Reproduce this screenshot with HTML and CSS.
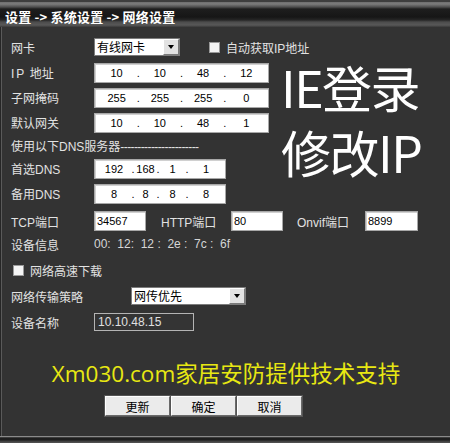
FILE: index.html
```html
<!DOCTYPE html>
<html lang="zh-CN">
<head>
<meta charset="utf-8">
<title>网络设置</title>
<link rel="stylesheet" href="styles.css">
</head>
<body>
<div class="window">
  <div class="titlebar"><span class="title">设置 -&gt; 系统设置 -&gt; 网络设置</span></div>
  <div class="form">
    <div class="row r-nic">
      <span class="label">网卡</span>
      <div class="select sel-nic"><span class="sel-text">有线网卡</span><span class="sel-btn"><i class="arrow"></i></span></div>
      <span class="check check-dhcp"></span><span class="check-label">自动获取IP地址</span>
    </div>
    <div class="row r-field">
      <span class="label"><span class="ip-sp">IP</span> 地址</span>
      <div class="field ipbox"><span class="seg">10</span><span class="dot">.</span><span class="seg">10</span><span class="dot">.</span><span class="seg">48</span><span class="dot">.</span><span class="seg">12</span></div>
    </div>
    <div class="row r-field">
      <span class="label">子网掩码</span>
      <div class="field ipbox"><span class="seg">255</span><span class="dot">.</span><span class="seg">255</span><span class="dot">.</span><span class="seg">255</span><span class="dot">.</span><span class="seg">0</span></div>
    </div>
    <div class="row r-field">
      <span class="label">默认网关</span>
      <div class="field ipbox"><span class="seg">10</span><span class="dot">.</span><span class="seg">10</span><span class="dot">.</span><span class="seg">48</span><span class="dot">.</span><span class="seg">1</span></div>
    </div>
    <div class="row r-head">
      <span class="head">使用以下DNS服务器<span class="dashes">-----------------------</span></span>
    </div>
    <div class="row r-field">
      <span class="label">首选DNS</span>
      <div class="field dnsbox"><span class="seg s1">192</span><span class="dot">.</span><span class="seg s2">168</span><span class="dot">.</span><span class="seg s3">1</span><span class="dot">.</span><span class="seg s4">1</span></div>
    </div>
    <div class="row r-field">
      <span class="label">备用DNS</span>
      <div class="field dnsbox"><span class="seg s1">8</span><span class="dot">.</span><span class="seg s2">8</span><span class="dot">.</span><span class="seg s3">8</span><span class="dot">.</span><span class="seg s4">8</span></div>
    </div>
    <div class="row r-port">
      <span class="label">TCP端口</span>
      <div class="field port">34567</div>
      <span class="plabel p-http">HTTP端口</span>
      <div class="field port">80</div>
      <span class="plabel p-onvif">Onvif端口</span>
      <div class="field port port-w">8899</div>
    </div>
    <div class="row r-info">
      <span class="label">设备信息</span>
      <span class="mac">00:&nbsp; 12:&nbsp; 12 :&nbsp; 2e :&nbsp; 7c :&nbsp; 6f</span>
    </div>
    <div class="row r-check">
      <span class="check check-fast"></span><span class="check-label">网络高速下载</span>
    </div>
    <div class="row r-strategy">
      <span class="label label-wide">网络传输策略</span>
      <div class="select sel-strategy"><span class="sel-text">网传优先</span><span class="sel-btn"><i class="arrow"></i></span></div>
    </div>
    <div class="row r-name">
      <span class="label">设备名称</span>
      <div class="namebox">10.10.48.15</div>
    </div>
  </div>
  <div class="promo">Xm030.com家居安防提供技术支持</div>
  <div class="buttons">
    <button class="btn">更新</button>
    <button class="btn">确定</button>
    <button class="btn">取消</button>
  </div>
  <div class="statusbar"></div>
  <div class="watermark">
    <div class="wm-line">IE登录</div>
    <div class="wm-line">修改IP</div>
  </div>
</div>
</body>
</html>
```
FILE: styles.css
```css
* { box-sizing: border-box; }

body {
  margin: 0;
  background: #333333;
  font-family: "Liberation Sans", "Noto Sans CJK SC", sans-serif;
  font-size: 12px;
  color: #e2e2e2;
}

.window {
  width: 450px;
  height: 443px;
  position: relative;
  display: flex;
  flex-direction: column;
  background: #333333;
  box-shadow: inset 1px 0 #262626, inset 2px 0 #5a5a5a;
  overflow: hidden;
}

.titlebar {
  flex: none;
  height: 27px;
  padding: 5px 0 0 5px;
  display: flex;
  align-items: center;
  background: linear-gradient(to bottom,
    #3e3e3e 0px, #3e3e3e 2px,
    #6e6e6e 2px, #7c7c7c 4px,
    #4e4e4e 7px, #1e1e1e 9px,
    #161616 17px, #262626 20px,
    #4c4c4c 22px, #585858 25px,
    #3a3a3a 27px);
}

.title {
  font-family: "Noto Sans CJK SC", sans-serif;
  font-size: 13px;
  font-weight: bold;
  color: #ffffff;
  letter-spacing: 0.2px;
  white-space: pre;
}

.form {
  padding-left: 11px;
  display: flex;
  flex-direction: column;
}

.row {
  display: flex;
  align-items: center;
  flex: none;
}

.label {
  flex: none;
  width: 83px;
  white-space: nowrap;
}

.label-wide { width: 120px; }

.ip-sp { letter-spacing: 2px; }

.r-nic { height: 20px; margin-top: 10px; margin-bottom: 3px; }
.r-field { height: 25px; }
.r-head { height: 21px; }
.r-port { height: 30px; }
.r-info { height: 16px; }
.r-check { height: 36px; }
.r-strategy { height: 16px; }
.r-name { height: 36px; }

/* select */
.select {
  flex: none;
  height: 18px;
  display: flex;
  background: #ffffff;
  border: 1px solid #7c7c7c;
  color: #000;
}
.sel-nic { width: 86px; }
.sel-strategy { width: 115px; }
.sel-text {
  flex: 1;
  padding-left: 2px;
  line-height: 16px;
  font-family: "Noto Sans CJK SC", sans-serif;
  font-size: 12px;
}
.sel-btn {
  flex: none;
  width: 16px;
  display: flex;
  align-items: center;
  justify-content: center;
  background: #e2e2e2;
  border: 1px solid;
  border-color: #ffffff #7a7a7a #7a7a7a #ffffff;
}
.arrow {
  width: 0;
  height: 0;
  border-left: 3.5px solid transparent;
  border-right: 3.5px solid transparent;
  border-top: 4px solid #000;
}

/* checkbox */
.check {
  flex: none;
  width: 11px;
  height: 11px;
  background: #f4f4f4;
  border: 1px solid #9a9a9a;
}
.check-dhcp { margin-left: 29px; }
.check-fast { margin-left: 2px; }
.check-label { margin-left: 6px; white-space: nowrap; }

/* fields */
.field {
  flex: none;
  height: 20px;
  background: #ffffff;
  border: 1px solid #a8a8a8;
  box-shadow: inset 1px 1px #d0d0d0;
  color: #000;
  font-size: 11px;
  display: flex;
  align-items: center;
}
.ipbox { width: 175px; }
.dnsbox { width: 132px; }
.seg { text-align: center; }
.ipbox .seg { flex: 1; }
.dnsbox .s1 { width: 38px; }
.dnsbox .s2 { width: 25px; }
.dnsbox .s3 { width: 29px; }
.dnsbox .s4 { flex: 1; }
.dot {
  width: 0;
  display: flex;
  justify-content: center;
  overflow: visible;
}

.head { white-space: nowrap; }
.dashes { letter-spacing: -0.6px; }

.port {
  width: 52px;
  padding-left: 2px;
}
.port-w { width: 53px; }
.plabel { flex: none; white-space: nowrap; }
.p-http { margin-left: 15px; width: 70px; }
.p-onvif { margin-left: 14px; width: 68px; }

.mac { color: #d6d6d6; white-space: nowrap; }

.namebox {
  flex: none;
  width: 100px;
  height: 18px;
  border: 1px solid #b4b4b4;
  background: #343434;
  color: #e0e0e0;
  padding-left: 3px;
  line-height: 16px;
}

/* footer */
.promo {
  flex: none;
  margin-top: 16px;
  height: 36px;
  line-height: 36px;
  text-align: center;
  padding-left: 2px;
  font-family: "Open Sans", "Noto Sans CJK SC", sans-serif;
  font-size: 22.5px;
  color: #e8e812;
  white-space: nowrap;
}

.buttons {
  flex: none;
  margin-top: 4px;
  padding-left: 105px;
  display: flex;
  gap: 1px;
}
.btn {
  width: 65px;
  height: 20px;
  padding: 0;
  margin: 0;
  background: #ebebeb;
  border: 1px solid;
  border-color: #ffffff #6a6a6a #6a6a6a #ffffff;
  box-shadow: 0 0 0 1px #555;
  font-family: "Noto Sans CJK SC", sans-serif;
  font-size: 12px;
  color: #000;
}

.statusbar {
  flex: none;
  margin-top: auto;
  height: 7px;
  background: linear-gradient(to bottom,
    #8a8a8a 0px, #8a8a8a 1px,
    #5a5a5a 1px, #1e1e1e 2px,
    #1e1e1e 4px, #3c3c3c 5px,
    #555555 7px);
}

.watermark {
  position: absolute;
  left: 281px;
  top: 61px;
  display: flex;
  flex-direction: column;
  gap: 14px;
  font-family: "Noto Sans CJK SC", sans-serif;
  font-size: 50px;
  line-height: 51px;
  color: #ffffff;
  white-space: nowrap;
}
.wm-line { letter-spacing: -1.5px; }
```
